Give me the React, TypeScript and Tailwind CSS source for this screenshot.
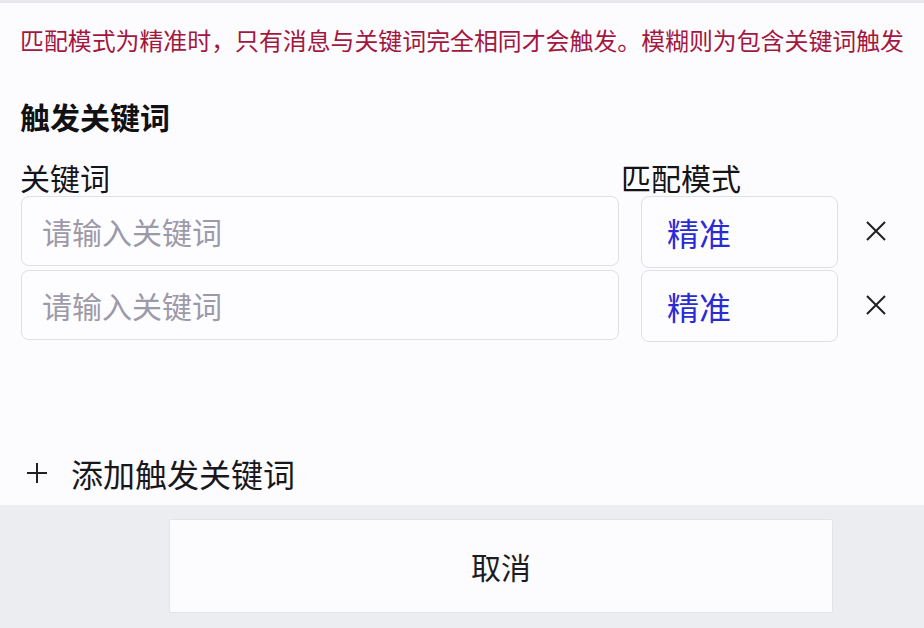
import React from "react";

const font = { fontFamily: '"Noto Sans CJK SC", "Noto Sans", sans-serif' };

function XIcon() {
  return (
    <svg width="20" height="20" viewBox="0 0 20 20" className="shrink-0">
      <path d="M1 1 L19 19 M19 1 L1 19" stroke="#1f1f24" strokeWidth="2" strokeLinecap="butt" />
    </svg>
  );
}

function PlusIcon() {
  return (
    <svg width="20" height="20" viewBox="0 0 20 20" className="shrink-0">
      <path d="M10 0 L10 20 M0 10 L20 10" stroke="#1f1f24" strokeWidth="2" />
    </svg>
  );
}

function Row() {
  return (
    <div className="flex h-[72px] items-start pl-[21px]">
      <div className="flex h-[70px] w-[598px] items-center rounded-[8px] border border-[#dfe0e6] bg-[#fdfdff] pl-[20px]">
        <span className="text-[30px] leading-[36px] text-[#9c9aa8]">请输入关键词</span>
      </div>
      <div className="ml-[22px] flex h-[72px] w-[197px] items-center rounded-[8px] border border-[#dfe0e6] bg-[#fdfdff] pl-[25px]">
        <span className="text-[32px] leading-[36px] text-[#2a2bd4]">精准</span>
      </div>
      <div className="ml-[28px] flex h-[70px] items-center">
        <XIcon />
      </div>
    </div>
  );
}

export default function App() {
  return (
    <div
      style={font}
      className="flex h-[628px] w-[924px] flex-col overflow-hidden border-t-[3px] border-[#e6e8ec] bg-[#fcfcfe]"
    >
      <div className="flex h-[502px] shrink-0 flex-col">
        <p className="mt-[19px] whitespace-nowrap pl-[20px] text-[23.9px] leading-[36px] text-[#a3173f]">
          匹配模式为精准时，只有消息与关键词完全相同才会触发。模糊则为包含关键词触发
        </p>
        <h2 className="mt-[40px] pl-[20px] text-[30px] font-bold leading-[36px] text-[#111114]">
          触发关键词
        </h2>
        <div className="mt-[25px] flex pl-[20px] text-[30px] leading-[36px] text-[#141418]">
          <span className="w-[601px]">关键词</span>
          <span>匹配模式</span>
        </div>
        <div className="mt-px flex flex-col gap-[2px]">
          <Row />
          <Row />
        </div>
        <div className="mt-[113px] flex items-center pl-[27px]">
          <PlusIcon />
          <span className="ml-[24px] text-[32px] leading-[36px] text-[#17171c]">添加触发关键词</span>
        </div>
      </div>
      <div className="flex flex-1 bg-[#ebedf0] pl-[169px] pt-[14px]">
        <div className="flex h-[94px] w-[664px] items-center justify-center rounded-[2px] border border-[#e3e4e8] bg-[#fcfcfe]">
          <span className="text-[30px] leading-[36px] text-[#1c1c22]">取消</span>
        </div>
      </div>
    </div>
  );
}
